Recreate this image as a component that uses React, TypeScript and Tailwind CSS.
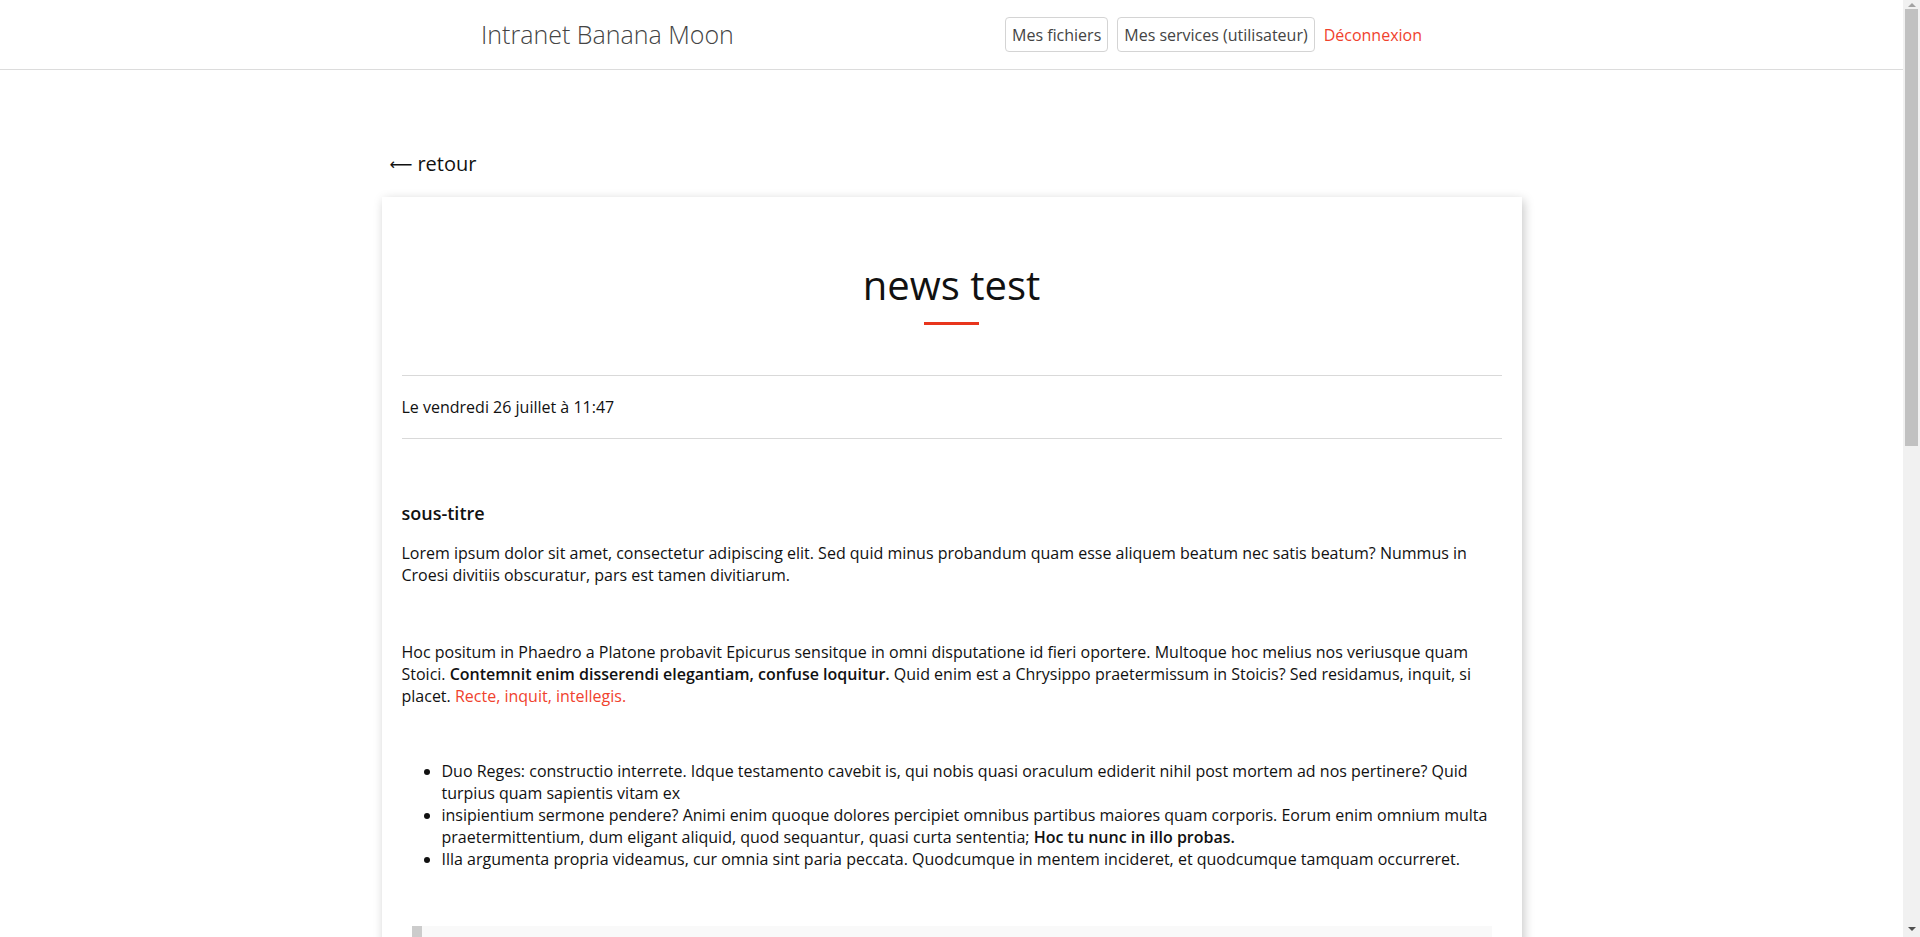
function Scrollbar() {
  return (
    <div className="w-[17px] shrink-0 h-full bg-[#f1f1f1] flex flex-col items-center">
      <div className="h-[9px] flex items-center justify-center pt-[1px]">
        <div className="w-0 h-0 border-l-[4px] border-r-[4px] border-b-[4px] border-l-transparent border-r-transparent border-b-[#a3a3a3]" />
      </div>
      <div className="w-full px-[2px] flex-1 flex flex-col">
        <div className="h-[437px] bg-[#c1c1c1]" />
      </div>
      <div className="h-[14px] flex items-center justify-center pb-[3px]">
        <div className="w-0 h-0 border-l-[4px] border-r-[4px] border-t-[4px] border-l-transparent border-r-transparent border-t-[#505050]" />
      </div>
    </div>
  );
}

export default function App() {
  const font = { fontFamily: '"Open Sans", "DejaVu Sans", sans-serif' };

  return (
    <div className="flex h-screen overflow-hidden bg-white text-[#111]" style={font}>
      <div className="flex-1 h-full overflow-y-auto [scrollbar-width:none]">
        <header className="h-[70px] border-b border-[#dcdcdc] bg-white">
          <div className="max-w-[941px] mx-auto h-full flex items-center justify-between">
            <a className="text-[25px] font-light text-[#444]">Intranet Banana Moon</a>
            <nav className="flex items-center">
              <button className="h-[35px] px-[6px] border border-[#d4d4d4] rounded-[4px] text-[16px] text-[#444] bg-white">
                Mes fichiers
              </button>
              <button className="ml-[9px] h-[35px] px-[6px] border border-[#d4d4d4] rounded-[4px] text-[16px] text-[#444] bg-white">
                Mes services (utilisateur)
              </button>
              <a className="ml-[9px] text-[16px] text-[#f0422e]">Déconnexion</a>
            </nav>
          </div>
        </header>

        <main className="max-w-[1140px] mx-auto pt-[80px] pb-[70px]">
          <a className="inline-flex items-center h-[28px] ml-[8px] text-[20px] text-[#111]">
            <span className="text-[16px] mr-[5px]">⟵</span>retour
          </a>

          <article className="mt-[19px] bg-white px-[20px] pt-[64px] pb-[60px] shadow-[2px_3px_10px_rgba(0,0,0,0.22)]">
            <div className="flex flex-col items-center">
              <h1 className="text-[40px] leading-[48px] text-[#111]">news test</h1>
              <div className="mt-[13px] w-[55px] h-[3px] bg-[#e8351d]" />
            </div>

            <div className="mt-[50px] border-t border-b border-[#d9d9d9] py-[20px] text-[16px] leading-[22px]">
              Le vendredi 26 juillet à 11:47
            </div>

            <div className="text-[16px] leading-[22px]">
              <h3 className="mt-[63px] text-[18px] leading-[22px] font-semibold">sous-titre</h3>
              <p className="mt-[18px]">
                Lorem ipsum dolor sit amet, consectetur adipiscing elit. Sed quid minus probandum quam esse aliquem
                beatum nec satis beatum? Nummus in Croesi divitiis obscuratur, pars est tamen divitiarum.
              </p>
              <p className="mt-[55px]">
                Hoc positum in Phaedro a Platone probavit Epicurus sensitque in omni disputatione id fieri oportere.
                Multoque hoc melius nos veriusque quam Stoici.{" "}
                <b className="font-semibold">Contemnit enim disserendi elegantiam, confuse loquitur.</b> Quid enim est
                a Chrysippo praetermissum in Stoicis? Sed residamus, inquit, si placet.{" "}
                <a className="text-[#f0422e]">Recte, inquit, intellegis.</a>
              </p>
              <ul className="mt-[53px] list-disc pl-[40px]">
                <li>
                  Duo Reges: constructio interrete. Idque testamento cavebit is, qui nobis quasi oraculum ediderit
                  nihil post mortem ad nos pertinere? Quid turpius quam sapientis vitam ex
                </li>
                <li>
                  insipientium sermone pendere? Animi enim quoque dolores percipiet omnibus partibus maiores quam
                  corporis. Eorum enim omnium multa praetermittentium, dum eligant aliquid, quod sequantur, quasi
                  curta sententia; <b className="font-semibold">Hoc tu nunc in illo probas.</b>
                </li>
                <li>
                  Illa argumenta propria videamus, cur omnia sint paria peccata. Quodcumque in mentem incideret, et
                  quodcumque tamquam occurreret.
                </li>
              </ul>

              <blockquote className="mt-[56px] mx-[10px] bg-[#f9f9f9] border-l-[10px] border-[#ccc] px-[10px] py-[8px] flex">
                <span className="text-[60px] leading-[40px] text-[#ccc] mr-[6px] mt-[14px]">“</span>
                <p className="pt-[6px] pb-[6px]">
                  Quae cum dixisset, paulumper institerunt. Tu vero, inquam, ducas licet, si sequetur; Sed ego in hoc
                  resisto; Ergo adhuc, quantum equidem intellego, causa non videtur fuisse mutandi nominis.
                </p>
              </blockquote>

              <p className="mt-[54px]">
                Ut in geometria, prima si dederis, danda sunt omnia. Quae similitudo in genere etiam humano apparet.
                Quis istud possit, inquit, negare? Negat enim summo bono afferre incrementum diem. Quod quidem nobis
                non saepe contingit.
              </p>
              <h3 className="mt-[54px] text-[18px] leading-[22px] font-semibold">Deuxième partie</h3>
              <p className="mt-[20px]">
                Nam ista vestra: Si gravis, brevis; Quid ergo attinet gloriose loqui, nisi constanter loquare? Atque
                haec coniunctio confusioque virtutum tamen a philosophis ratione quadam distinguitur. Quid ait
                Aristoteles reliquique Platonis alumni?
              </p>
              <ol className="mt-[53px] list-decimal pl-[40px]">
                <li>Hoc est non dividere, sed frangere.</li>
                <li>Age sane, inquam. Quae cum essent dicta, discessimus.</li>
                <li>Sed haec omittamus; Ut id aliis narrare gestiant?</li>
                <li>Tamen a proposito, inquam, aberramus.</li>
              </ol>
              <p className="mt-[54px]">
                Piso igitur hoc modo, vir optimus tuique, ut scis, amantissimus. Beatum, inquit. Quamquam id quidem,
                infinitum est in hac urbe; Sed nunc, quod agimus; Non quam nostram quidem, inquit Pomponius iocans.
              </p>
              <p className="mt-[54px]">
                Cur post Tarentum ad Archytam? Mihi quidem Antiochum, quem audis, satis belle videris attendere. Hanc
                ergo intuens debet institutum illud quasi signum absolvere. Nihil sane. Erat enim Polemonis.
              </p>
            </div>
          </article>
        </main>
      </div>
      <Scrollbar />
    </div>
  );
}
